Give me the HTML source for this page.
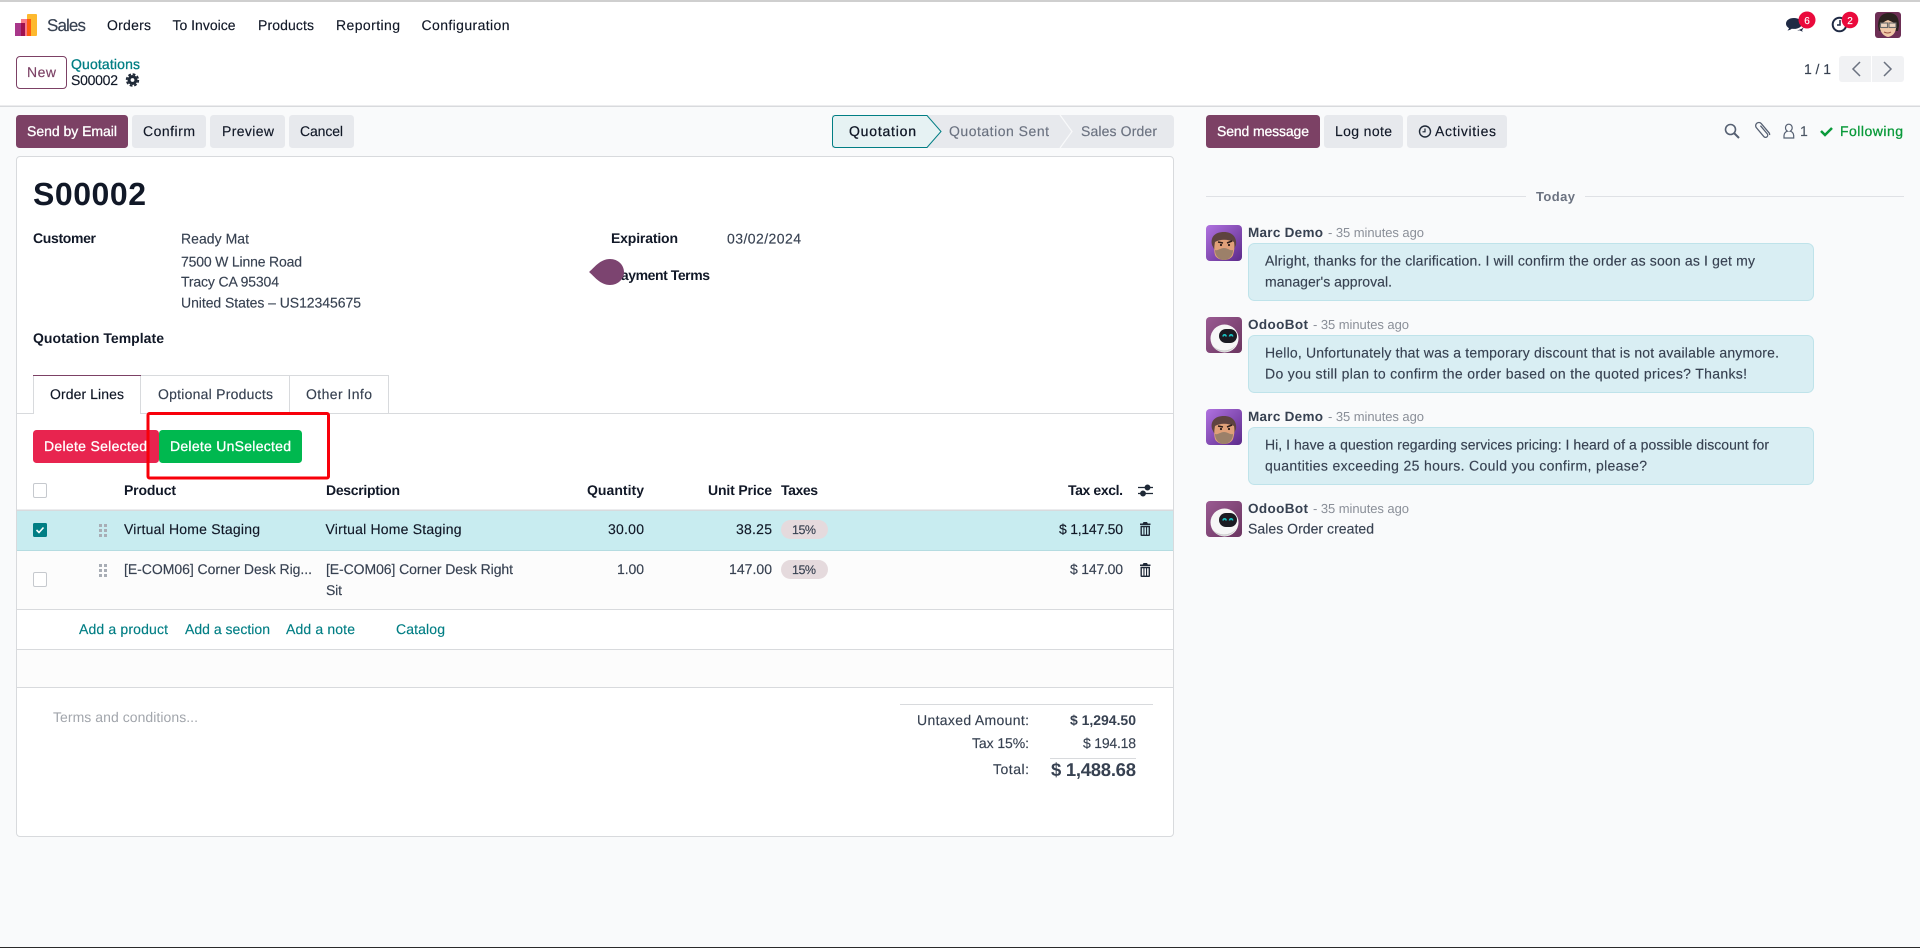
<!DOCTYPE html>
<html lang="en">
<head>
<meta charset="utf-8">
<title>S00002 - Sales</title>
<style>
html,body{margin:0;padding:0;background:#f9fafb;width:1920px;height:948px;overflow:hidden}
svg{display:block;position:absolute;left:0;top:0}
text{font-family:"Liberation Sans",Arial,sans-serif;font-size:14px;fill:#374151;stroke:#374151;stroke-width:.15;text-rendering:geometricPrecision}
.d{fill:#111827;stroke:#111827}
.b{font-weight:bold;stroke-width:0}
.t{fill:#017e84;stroke:#017e84}
.g{fill:#6b7280;stroke:#6b7280}
.w{fill:#fff;stroke:#fff}
.m{fill:#8a8f98;stroke-width:0;font-size:13px}
</style>
</head>
<body>
<svg width="1920" height="948" viewBox="0 0 1920 948" xmlns="http://www.w3.org/2000/svg">
<defs>
<linearGradient id="pg" x1="0" y1="0" x2="1" y2="1"><stop offset="0" stop-color="#b072e0"/><stop offset="1" stop-color="#5c2a8a"/></linearGradient>
<linearGradient id="bg" x1="0" y1="0" x2="1" y2="1"><stop offset="0" stop-color="#9a5a92"/><stop offset="1" stop-color="#6b3560"/></linearGradient>
<clipPath id="ac"><rect width="36" height="36" rx="4"/></clipPath>
<g id="marc" clip-path="url(#ac)">
<rect width="36" height="36" fill="url(#pg)"/>
<path d="M6 20C4 12 9 7 18 7c8 0 13 5 12 13l-2 4H8z" fill="#5e4340"/>
<path d="M9 17c5-3 13-3 19 0 1 5 0 10-1 13-1 3-5 5-9 5s-8-2-9-5c-1-3-1-8 0-13z" fill="#e0a079"/>
<path d="M9 25c3 1 5-2 9-2s6 3 9 2c0 6-4 10-9 10s-9-4-9-10z" fill="#9c8069"/>
<path d="M12 17l5 1M21 18l5-2" stroke="#2c1c18" stroke-width="1.500" fill="none"/>
<circle cx="15" cy="20" r="1.100" fill="#2c1c18"/><circle cx="23" cy="20" r="1.100" fill="#2c1c18"/>
</g>
<g id="bot" clip-path="url(#ac)">
<rect width="36" height="36" fill="url(#bg)"/>
<circle cx="18.500" cy="21.500" r="14" fill="#f6f6f6"/>
<path d="M6 28a14 14 0 0 0 24 0 16 16 0 0 1-24 0z" fill="#cfcfcf"/>
<rect x="13" y="12" width="18" height="14" rx="7" fill="#1b1b22"/>
<path d="M17 19.500c.4-2.300 2.800-2.300 3.200 0M23.500 19.500c.4-2.300 2.800-2.300 3.200 0" stroke="#19c4c4" stroke-width="1.600" fill="none"/>
</g>
<clipPath id="uc"><rect width="26" height="26" rx="3"/></clipPath>
<g id="grip" fill="#a8adb5">
<rect x="0" y="0" width="3" height="3"/><rect x="5" y="0" width="3" height="3"/>
<rect x="0" y="5" width="3" height="3"/><rect x="5" y="5" width="3" height="3"/>
<rect x="0" y="10" width="3" height="3"/><rect x="5" y="10" width="3" height="3"/>
</g>
<g id="trash" fill="#1f2937">
<path d="M4 0h3.500l.8 1.500h2.700V3H.5V1.500h2.700z"/>
<path fill-rule="evenodd" d="M1 3.800h9.500V13a1 1 0 0 1-1 1H2a1 1 0 0 1-1-1zM2.400 5.200v7.400h1.500V5.200zM5 5.200v7.400h1.500V5.200zM7.600 5.200v7.400h1.500V5.200z"/>
</g>
</defs>

<!-- page top -->
<rect width="1920" height="948" fill="#f9fafb"/>
<rect width="1920" height="106" fill="#fff"/>
<rect y="0" width="1920" height="2" fill="#cfcfcf"/>
<rect y="105.500" width="1920" height="1.500" fill="#d8dadd"/>

<!-- logo -->
<rect x="27" y="14" width="10" height="22" rx="1" fill="#fdb92e"/>
<rect x="21" y="19" width="10" height="17" fill="#f87a8a"/>
<rect x="27" y="19" width="4" height="17" fill="#ff5a10"/>
<rect x="15" y="23" width="10" height="13" fill="#a8378a"/>
<rect x="21" y="23" width="4" height="13" fill="#a0104f"/>

<!-- navbar -->
<text x="47" y="31" style="font-size:17px" textLength="39" lengthAdjust="spacing">Sales</text>
<text x="107" y="30" class="d" textLength="44" lengthAdjust="spacing">Orders</text>
<text x="172.500" y="30" class="d" textLength="63" lengthAdjust="spacing">To Invoice</text>
<text x="258" y="30" class="d" textLength="56" lengthAdjust="spacing">Products</text>
<text x="336" y="30" class="d" textLength="64" lengthAdjust="spacing">Reporting</text>
<text x="421.500" y="30" class="d" textLength="88" lengthAdjust="spacing">Configuration</text>

<!-- systray -->
<path d="M1794 18c-4.700 0-8 2.400-8 5.600 0 1.900 1.200 3.500 3 4.500-.3 1-.9 1.800-1.500 2.400 1.700-.2 3.200-.9 4.300-1.800.7.100 1.400.2 2.200.2 4.700 0 8-2.400 8-5.300s-3.300-5.600-8-5.600z" fill="#1f2a44"/>
<path d="M1801 29c1.300-.3 2.200-1.400 2.500-2.400v.2c0 1.500-.6 2.600-1.500 3.300.3.600.7 1.200 1.100 1.500-1.400-.1-2.600-.6-3.300-1.200-1 .1-2 0-2.800-.1 1.600-.2 3-.7 4-1.300z" fill="#1f2a44"/>
<circle cx="1807" cy="20" r="8.500" fill="#ea0a3c"/>
<text x="1807" y="24" text-anchor="middle" class="w" style="font-size:10px">6</text>
<circle cx="1839.500" cy="24.500" r="6.800" fill="none" stroke="#1f2a44" stroke-width="2"/>
<path d="M1840 20v5h-3" fill="none" stroke="#1f2a44" stroke-width="1.500"/>
<circle cx="1850" cy="20" r="8.300" fill="#ea0a3c"/>
<text x="1850" y="24" text-anchor="middle" class="w" style="font-size:10px">2</text>
<g transform="translate(1875 12)" clip-path="url(#uc)">
<rect width="26" height="26" fill="#6d2f55"/>
<path d="M3 14C3 4 8 1 14 1s10 3 10 13l-1 5H4z" fill="#2b2320"/>
<path d="M5 12c3-1 5-3 8-4 2 1 6 3 8 3 1 8-2 13-8 14-5-1-9-6-8-13z" fill="#f0c8a8"/>
<rect x="5.500" y="11" width="7" height="4.500" fill="#e8e0d8" fill-opacity=".5" stroke="#6a6a6a" stroke-width="1.100"/><rect x="14" y="11" width="7" height="4.500" fill="#e8e0d8" fill-opacity=".5" stroke="#6a6a6a" stroke-width="1.100"/>
<path d="M9 20q4 2 7 0" stroke="#9a5040" fill="none"/>
</g>

<!-- control panel -->
<rect x="16.500" y="56.500" width="50" height="32" rx="3.500" fill="#fff" stroke="#7c4165"/>
<text x="27" y="77" style="fill:#7c4165;stroke:#7c4165" textLength="29" lengthAdjust="spacing">New</text>
<text x="71" y="69" class="t" textLength="69" lengthAdjust="spacing" style="stroke-width:.3">Quotations</text>
<text x="71" y="85" class="d" textLength="47" lengthAdjust="spacing">S00002</text>
<g transform="translate(132.500 80)" fill="#1f2937">
<circle r="5"/><circle r="5.800" fill="none" stroke="#1f2937" stroke-width="1.800" stroke-dasharray="2.800 1.750"/><circle r="1.900" fill="#fff"/>
</g>
<text x="1804" y="74" textLength="27" lengthAdjust="spacing">1 / 1</text>
<rect x="1839" y="56" width="65" height="26" rx="3" fill="#f1f2f4"/>
<rect x="1871" y="56" width="1" height="26" fill="#fff"/>
<path d="M1860 62l-7 7 7 7" fill="none" stroke="#6b7280" stroke-width="1.500"/>
<path d="M1884 62l7 7-7 7" fill="none" stroke="#6b7280" stroke-width="1.500"/>

<!-- action buttons -->
<rect x="16" y="115" width="112" height="33" rx="3.500" fill="#7c4165"/>
<text x="27" y="136" class="w" textLength="90" lengthAdjust="spacing" style="stroke-width:.3">Send by Email</text>
<rect x="132" y="115" width="74" height="33" rx="3.500" fill="#e7e9ed"/>
<text x="143" y="136" class="d" textLength="52" lengthAdjust="spacing">Confirm</text>
<rect x="210" y="115" width="75" height="33" rx="3.500" fill="#e7e9ed"/>
<text x="222" y="136" class="d" textLength="52" lengthAdjust="spacing">Preview</text>
<rect x="289" y="115" width="65" height="33" rx="3.500" fill="#e7e9ed"/>
<text x="300" y="136" class="d" textLength="43" lengthAdjust="spacing">Cancel</text>

<!-- statusbar -->
<path d="M832 115h338a4 4 0 0 1 4 4v25a4 4 0 0 1-4 4H832z" fill="#e7e9ed"/>
<path d="M1060 115l12 16.500-12 16.500" fill="none" stroke="#f9fafb" stroke-width="1.200"/>
<path d="M835.500 115.500H927l14 16-14 16h-91.500a3 3 0 0 1-3-3v-26a3 3 0 0 1 3-3z" fill="#e6f2f3" stroke="#017e84"/>
<text x="849" y="136" class="d" textLength="67" lengthAdjust="spacing" style="stroke-width:.3">Quotation</text>
<text x="949" y="136" class="g" textLength="100" lengthAdjust="spacing">Quotation Sent</text>
<text x="1081" y="136" class="g" textLength="76" lengthAdjust="spacing">Sales Order</text>

<!-- form sheet -->
<rect x="16.500" y="156.500" width="1157" height="680" rx="3.500" fill="#fff" stroke="#d8dadd"/>
<text x="33" y="205" class="d b" style="font-size:32px" textLength="113" lengthAdjust="spacing">S00002</text>

<text x="33" y="243" class="d b" textLength="63" lengthAdjust="spacing">Customer</text>
<text x="181" y="243.500" textLength="68" lengthAdjust="spacing">Ready Mat</text>
<text x="181" y="266.500" textLength="121" lengthAdjust="spacing">7500 W Linne Road</text>
<text x="181" y="286.500" textLength="98" lengthAdjust="spacing">Tracy CA 95304</text>
<text x="181" y="307.500" textLength="180" lengthAdjust="spacing">United States – US12345675</text>
<text x="33" y="343" class="d b" textLength="131" lengthAdjust="spacing">Quotation Template</text>
<text x="611" y="243" class="d b" textLength="67" lengthAdjust="spacing">Expiration</text>
<text x="727" y="243.500" textLength="74" lengthAdjust="spacing">03/02/2024</text>
<text x="612" y="280" class="d b" textLength="98" lengthAdjust="spacing">Payment Terms</text>
<path d="M589 272c5-4 11-13 21-13 8 0 14 6 14 13s-6 13-14 13c-10 0-16-9-21-13z" fill="#7c4470"/>

<!-- tabs -->
<rect x="17" y="413" width="1156" height="1" fill="#d8dadd"/>
<path d="M140.500 413V375.500H388.500V413M289.500 375.500V413" fill="#fff" stroke="#d8dadd"/>
<path d="M33.500 414V375.500H140.500V414" fill="#fff" stroke="#d8dadd"/>
<rect x="34" y="414" width="106" height="1" fill="#fff"/>
<rect x="33" y="375" width="108" height="1" fill="#7c4165"/>
<text x="50" y="399" class="d" textLength="74" lengthAdjust="spacing">Order Lines</text>
<text x="158" y="399" textLength="115" lengthAdjust="spacing">Optional Products</text>
<text x="306" y="399" textLength="66" lengthAdjust="spacing">Other Info</text>

<!-- delete buttons -->
<rect x="33" y="430" width="126" height="33" rx="3.500" fill="#e8244f"/>
<rect x="159" y="430" width="143" height="33" rx="3.500" fill="#00b84f"/>
<text x="44" y="451" class="w" textLength="103" lengthAdjust="spacing" style="stroke-width:.3">Delete Selected</text>
<text x="170" y="451" class="w" textLength="121" lengthAdjust="spacing" style="stroke-width:.3">Delete UnSelected</text>
<rect x="148" y="413.500" width="180.500" height="64.500" rx="1.500" fill="none" stroke="#f8000a" stroke-width="3"/>

<!-- list table -->
<rect x="33.500" y="483.500" width="13" height="14" rx="1.500" fill="#fff" stroke="#c6c9ce"/>
<text x="124" y="495" class="d b" textLength="52" lengthAdjust="spacing">Product</text>
<text x="326" y="495" class="d b" textLength="74" lengthAdjust="spacing">Description</text>
<text x="587" y="495" class="d b" textLength="57" lengthAdjust="spacing">Quantity</text>
<text x="708" y="495" class="d b" textLength="64" lengthAdjust="spacing">Unit Price</text>
<text x="781" y="495" class="d b" textLength="37" lengthAdjust="spacing">Taxes</text>
<text x="1068" y="495" class="d b" textLength="55" lengthAdjust="spacing">Tax excl.</text>
<g stroke="#1f2937" stroke-width="1.300" fill="#1f2937">
<path d="M1138 487.500h15M1138 493.500h15" fill="none"/>
<circle cx="1147.500" cy="487.500" r="2.300"/><circle cx="1143" cy="493.500" r="2.300"/>
</g>

<rect x="17" y="510" width="1156" height="40" fill="#c8ecf0"/>
<rect x="17" y="509.500" width="1156" height="1.500" fill="#d8dadd"/>
<rect x="17" y="550" width="1156" height="1" fill="#b5dce1"/>
<rect x="33" y="523" width="14" height="14" rx="1.500" fill="#017e84"/>
<path d="M36.500 530l2.500 2.500 4.500-5" fill="none" stroke="#fff" stroke-width="1.600"/>
<use href="#grip" x="99" y="524"/>
<text x="124" y="534" class="d" textLength="136" lengthAdjust="spacing">Virtual Home Staging</text>
<text x="325.500" y="534" class="d" textLength="136" lengthAdjust="spacing">Virtual Home Staging</text>
<text x="608" y="534" class="d" textLength="36" lengthAdjust="spacing">30.00</text>
<text x="736" y="534" class="d" textLength="36" lengthAdjust="spacing">38.25</text>
<rect x="781" y="520" width="47" height="19" rx="9.500" fill="#e5dadd"/>
<text x="792" y="534" style="font-size:12.500px" textLength="24" lengthAdjust="spacing">15%</text>
<text x="1059" y="534" class="d" textLength="64" lengthAdjust="spacing">$ 1,147.50</text>
<use href="#trash" x="1139.500" y="522"/>

<rect x="17" y="551" width="1156" height="58" fill="#fcfcfc"/>
<rect x="33.500" y="572.500" width="13" height="14" rx="1.500" fill="#fff" stroke="#c6c9ce"/>
<use href="#grip" x="99" y="564"/>
<text x="124" y="574" textLength="188" lengthAdjust="spacing">[E-COM06] Corner Desk Rig...</text>
<text x="326" y="574" textLength="187" lengthAdjust="spacing">[E-COM06] Corner Desk Right</text>
<text x="326" y="595" textLength="16" lengthAdjust="spacing">Sit</text>
<text x="617" y="574" textLength="27" lengthAdjust="spacing">1.00</text>
<text x="729" y="574" textLength="43" lengthAdjust="spacing">147.00</text>
<rect x="781" y="560" width="47" height="19" rx="9.500" fill="#e5dadd"/>
<text x="792" y="574" style="font-size:12.500px" textLength="24" lengthAdjust="spacing">15%</text>
<text x="1070" y="574" textLength="53" lengthAdjust="spacing">$ 147.00</text>
<use href="#trash" x="1139.500" y="563"/>
<rect x="17" y="609" width="1156" height="1" fill="#d8dadd"/>
<text x="79" y="634" class="t" textLength="89" lengthAdjust="spacing">Add a product</text>
<text x="185" y="634" class="t" textLength="85" lengthAdjust="spacing">Add a section</text>
<text x="286" y="634" class="t" textLength="69" lengthAdjust="spacing">Add a note</text>
<text x="396" y="634" class="t" textLength="49" lengthAdjust="spacing">Catalog</text>
<rect x="17" y="649" width="1156" height="1" fill="#d8dadd"/>
<rect x="17" y="650" width="1156" height="37" fill="#fcfcfc"/>
<rect x="17" y="687" width="1156" height="1" fill="#d8dadd"/>

<!-- totals -->
<text x="53" y="722" style="fill:#a2a6ac;stroke-width:0" textLength="145" lengthAdjust="spacing">Terms and conditions...</text>
<rect x="900" y="704" width="253" height="1" fill="#d8dadd"/>
<text x="917" y="725" textLength="112" lengthAdjust="spacing">Untaxed Amount:</text>
<text x="1070" y="725" class="b" textLength="66" lengthAdjust="spacing">$ 1,294.50</text>
<text x="972" y="748" textLength="57" lengthAdjust="spacing">Tax 15%:</text>
<text x="1083" y="748" textLength="53" lengthAdjust="spacing">$ 194.18</text>
<rect x="1050" y="758" width="86" height="1" fill="#d8dadd"/>
<text x="993" y="774" textLength="36" lengthAdjust="spacing">Total:</text>
<text x="1051" y="776" class="b" style="font-size:18.500px" textLength="85" lengthAdjust="spacing">$ 1,488.68</text>

<!-- chatter -->
<rect x="1206" y="115" width="114" height="33" rx="3.500" fill="#7c4165"/>
<text x="1217" y="136" class="w" textLength="92" lengthAdjust="spacing" style="stroke-width:.3">Send message</text>
<rect x="1324" y="115" width="79" height="33" rx="3.500" fill="#e7e9ed"/>
<text x="1335" y="136" class="d" textLength="57" lengthAdjust="spacing">Log note</text>
<rect x="1407" y="115" width="100" height="33" rx="3.500" fill="#e7e9ed"/>
<circle cx="1425" cy="131.500" r="5.500" fill="none" stroke="#1f2937" stroke-width="1.400"/>
<path d="M1425 128.500v3.300h-2.500" fill="none" stroke="#1f2937" stroke-width="1.200"/>
<text x="1435" y="136" class="d" textLength="61" lengthAdjust="spacing">Activities</text>

<circle cx="1730.500" cy="129.500" r="5" fill="none" stroke="#566072" stroke-width="1.600"/>
<path d="M1734 133l5 5" stroke="#566072" stroke-width="2"/>
<g transform="translate(1762.500 130.500) rotate(-40)"><path d="M1.500-5V5.500a2.200 2.200 0 0 1-4.400 0V-6a3.200 3.200 0 0 1 6.400 0V6a4 3 0 0 1-1 2" fill="none" stroke="#566072" stroke-width="1.300"/></g>
<path d="M1784 138v-2.500c0-2.500 2-4 3.500-4.300-1.600-1-2-2.600-2-3.500 0-2 1.500-3.500 3.300-3.500s3.400 1.500 3.400 3.500c0 1-.5 2.500-2 3.500 1.500.3 3.500 1.800 3.500 4.300v2.500z" fill="none" stroke="#566072" stroke-width="1.200"/>
<text x="1800" y="136" style="fill:#4b5563;stroke:#4b5563" textLength="7" lengthAdjust="spacing">1</text>
<path d="M1821 131l4 4 7-7" fill="none" stroke="#0a9a3a" stroke-width="2.500"/>
<text x="1840" y="136" textLength="63" lengthAdjust="spacing" style="fill:#0a9a3a;stroke:#0a9a3a;stroke-width:.3">Following</text>

<rect x="1206" y="196" width="320" height="1" fill="#dfe1e5"/>
<rect x="1585" y="196" width="319" height="1" fill="#dfe1e5"/>
<text x="1536" y="201" class="g b" style="font-size:13px" textLength="39" lengthAdjust="spacing">Today</text>

<use href="#marc" x="1206" y="225"/>
<text x="1248" y="237" class="b" style="font-size:13.500px" textLength="75" lengthAdjust="spacing">Marc Demo</text>
<text x="1328" y="237" class="m" textLength="96" lengthAdjust="spacing">- 35 minutes ago</text>
<rect x="1248.500" y="243.500" width="565" height="57" rx="6" fill="#d9eef3" stroke="#bfe3ea"/>
<text x="1265" y="265.500" textLength="490" lengthAdjust="spacing">Alright, thanks for the clarification. I will confirm the order as soon as I get my</text>
<text x="1265" y="286.500" textLength="127" lengthAdjust="spacing">manager's approval.</text>

<use href="#bot" x="1206" y="317"/>
<text x="1248" y="329" class="b" style="font-size:13.500px" textLength="60" lengthAdjust="spacing">OdooBot</text>
<text x="1313" y="329" class="m" textLength="96" lengthAdjust="spacing">- 35 minutes ago</text>
<rect x="1248.500" y="335.500" width="565" height="57" rx="6" fill="#d9eef3" stroke="#bfe3ea"/>
<text x="1265" y="357.500" textLength="514" lengthAdjust="spacing">Hello, Unfortunately that was a temporary discount that is not available anymore.</text>
<text x="1265" y="378.500" textLength="482" lengthAdjust="spacing">Do you still plan to confirm the order based on the quoted prices? Thanks!</text>

<use href="#marc" x="1206" y="409"/>
<text x="1248" y="421" class="b" style="font-size:13.500px" textLength="75" lengthAdjust="spacing">Marc Demo</text>
<text x="1328" y="421" class="m" textLength="96" lengthAdjust="spacing">- 35 minutes ago</text>
<rect x="1248.500" y="427.500" width="565" height="57" rx="6" fill="#d9eef3" stroke="#bfe3ea"/>
<text x="1265" y="449.500" textLength="504" lengthAdjust="spacing">Hi, I have a question regarding services pricing: I heard of a possible discount for</text>
<text x="1265" y="470.500" textLength="382" lengthAdjust="spacing">quantities exceeding 25 hours. Could you confirm, please?</text>

<use href="#bot" x="1206" y="501"/>
<text x="1248" y="513" class="b" style="font-size:13.500px" textLength="60" lengthAdjust="spacing">OdooBot</text>
<text x="1313" y="513" class="m" textLength="96" lengthAdjust="spacing">- 35 minutes ago</text>
<text x="1248" y="533.500" textLength="126" lengthAdjust="spacing">Sales Order created</text>

<rect y="947" width="1920" height="1" fill="#2a2a2a"/>
</svg>
</body>
</html>
